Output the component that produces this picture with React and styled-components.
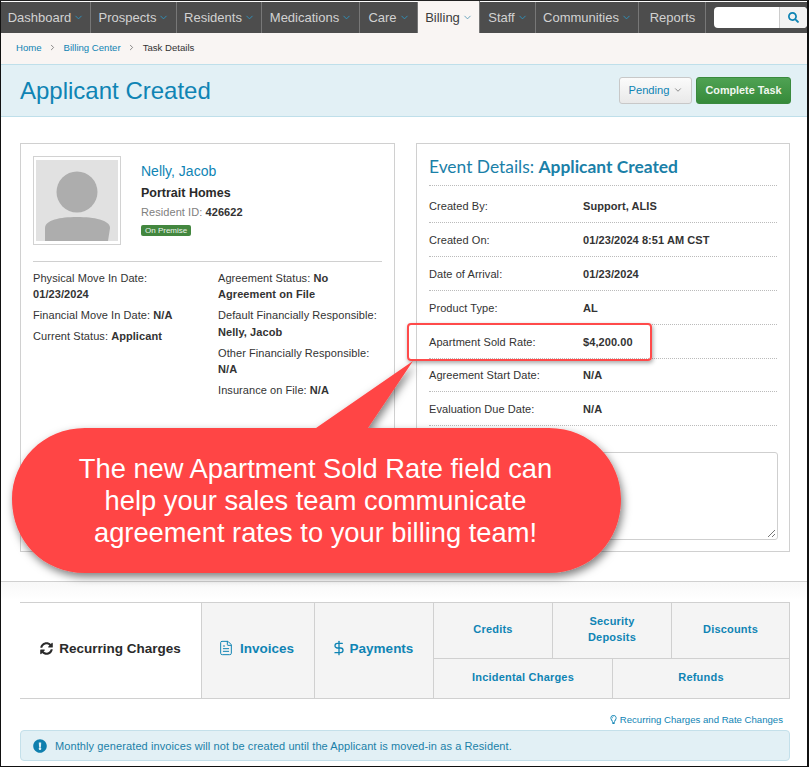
import React from 'react';
import styled, { createGlobalStyle } from 'styled-components';
import { FaSearch, FaSyncAlt, FaRegLightbulb, FaExclamationCircle } from 'react-icons/fa';
import { ChevronDown, ChevronRight, DollarSign, FileText } from 'lucide-react';

const GlobalStyle = createGlobalStyle`
  html, body {
    margin: 0;
    padding: 0;
    background: #fff;
    font-family: "Liberation Sans", Arial, sans-serif;
  }
`;

const Page = styled.div`
  position: relative;
  box-sizing: border-box;
  width: 809px;
  height: 767px;
  overflow: hidden;
  background: #fff;
  border-left: 1px solid #111;
  border-right: 2px solid #111;
  border-bottom: 1px solid #111;
  border-top: 1px solid #222;
`;

const Nav = styled.nav`
  display: flex;
  height: 31px;
  margin-top: 1px;
  background: #4d4d4d;
`;

const NavItem = styled.div`
  display: flex;
  align-items: center;
  justify-content: center;
  box-sizing: border-box;
  width: ${(p) => p.$w}px;
  padding-left: 1px;
  gap: 2px;
  font-size: 13px;
  color: ${(p) => (p.$active ? '#3d3d3d' : '#d2d2d2')};
  background: ${(p) => (p.$active ? '#f9f5f3' : 'transparent')};
  border-right: 1px solid #777;
  margin-top: ${(p) => (p.$active ? '-1px' : '0')};
  svg {
    flex-shrink: 0;
    color: ${(p) => (p.$active ? '#4f94b3' : '#2a9ccc')};
  }
`;

const SearchBox = styled.div`
  display: flex;
  width: 93px;
  height: 21px;
  margin: 5px 0 0 8px;
  border-radius: 4px;
  overflow: hidden;
  background: #fff;
`;

const SearchInput = styled.div`
  flex: 1;
`;

const SearchBtn = styled.div`
  display: flex;
  align-items: center;
  justify-content: center;
  width: 27px;
  background: #f2f2f2;
  border-left: 1px solid #ccc;
  color: #0f84b4;
  font-size: 11px;
`;

const Crumbs = styled.div`
  display: flex;
  align-items: center;
  box-sizing: border-box;
  height: 31px;
  padding: 0 0 2px 15px;
  gap: 6.5px;
  background: #f9f5f3;
  font-size: 9.6px;
  color: #333;
`;

const CrumbLink = styled.span`
  color: #0f84b4;
`;

const Band = styled.div`
  display: flex;
  align-items: center;
  justify-content: space-between;
  box-sizing: border-box;
  height: 53px;
  padding: 0 16px 0 19px;
  background: #e2f0f5;
  border-top: 1px solid #bfdfea;
  border-bottom: 1px solid #bfdfea;
`;

const Title = styled.h1`
  margin: 0;
  font-size: 24px;
  font-weight: 400;
  color: #0f84b4;
`;

const Actions = styled.div`
  display: flex;
  gap: 4px;
`;

const PendingBtn = styled.div`
  display: flex;
  align-items: center;
  justify-content: center;
  gap: 3px;
  box-sizing: border-box;
  width: 73px;
  height: 27px;
  padding-bottom: 2px;
  font-size: 11.2px;
  color: #0f84b4;
  background: linear-gradient(#fbfbfb, #e9e9e9);
  border: 1px solid #c8c8c8;
  border-radius: 3px;
  svg {
    color: #777;
  }
`;

const CompleteBtn = styled.div`
  display: flex;
  align-items: center;
  justify-content: center;
  box-sizing: border-box;
  width: 95px;
  height: 27px;
  padding-bottom: 2px;
  font-size: 10.8px;
  font-weight: 700;
  color: #f1f7ef;
  background: linear-gradient(#4fa253, #368a3a);
  border: 1px solid #3a8a3e;
  border-radius: 3px;
`;

const Content = styled.div`
  display: grid;
  grid-template-columns: 375px 374px;
  column-gap: 21px;
  box-sizing: border-box;
  height: 464px;
  padding: 26px 0 0 19px;
`;

const Panel = styled.section`
  box-sizing: border-box;
  height: 409px;
  border: 1px solid #d0d0d0;
  padding: ${(p) => p.$pad};
`;

const Profile = styled.div`
  display: flex;
  gap: 20px;
  height: 105px;
  border-bottom: 1px solid #d0d0d0;
`;

const Photo = styled.div`
  box-sizing: border-box;
  width: 88px;
  height: 89px;
  padding: 3px 2px;
  border: 1px solid #d2d2d2;
  background: #fff;
  svg {
    display: block;
  }
`;

const ProfileInfo = styled.div`
  display: flex;
  flex-direction: column;
  align-items: flex-start;
  padding-top: 6px;
`;

const Name = styled.div`
  font-size: 14px;
  line-height: 18px;
  color: #0f84b4;
`;

const Community = styled.div`
  margin-top: 4px;
  font-size: 12.5px;
  font-weight: 700;
  line-height: 18px;
  color: #2a2a2a;
`;

const ResidentId = styled.div`
  margin-top: 2px;
  font-size: 11px;
  line-height: 16px;
  letter-spacing: 0.07px;
  color: #808080;
  b {
    color: #333;
  }
`;

const Badge = styled.span`
  margin-top: 5px;
  padding: 0 4px;
  font-size: 8px;
  line-height: 11px;
  color: #eaf4ea;
  background: #43873f;
  border-radius: 2px;
`;

const Facts = styled.div`
  display: grid;
  grid-template-columns: 185px 1fr;
  padding-top: 8px;
`;

const FactCol = styled.div`
  display: flex;
  flex-direction: column;
  gap: 5px;
`;

const Fact = styled.p`
  margin: 0;
  font-size: 11px;
  line-height: ${(p) => (p.$tall ? 16.5 : 16)}px;
  letter-spacing: 0.07px;
  color: #333;
`;

const EventTitle = styled.h2`
  margin: 0;
  padding-bottom: 5px;
  font-family: Lato, sans-serif;
  font-size: 17.4px;
  line-height: 26px;
  font-weight: 400;
  color: #1a80a8;
  border-bottom: 1px dotted #bbb;
  b {
    font-weight: 700;
  }
`;

const Row = styled.div`
  display: grid;
  grid-template-columns: 154px 1fr;
  align-items: center;
  height: ${(p) => p.$h}px;
  padding-top: ${(p) => p.$top || 0}px;
  box-sizing: border-box;
  border-bottom: 1px dotted #bbb;
  font-size: 11px;
  letter-spacing: 0.07px;
  color: #333;
`;

const NoteBox = styled.div`
  position: relative;
  box-sizing: border-box;
  height: 88px;
  margin: 26px -1px 0 0;
  border: 1px solid #cfcfcf;
  border-radius: 3px;
`;

const ResizeHandle = styled.svg`
  position: absolute;
  right: 1px;
  bottom: 1px;
`;

const Lower = styled.div`
  box-sizing: border-box;
  height: 185px;
  padding: 20px 17px 0 19px;
  border-top: 1px solid #d0d0d0;
  background: linear-gradient(#f8f8f8, #fff 18px);
`;

const Tabs = styled.div`
  display: grid;
  box-sizing: border-box;
  grid-template-columns: 181px 113px 119px 1fr;
  height: 97px;
  border-top: 1px solid #d0d0d0;
  border-bottom: 1px solid #d0d0d0;
  border-right: 1px solid #d0d0d0;
`;

const MainTab = styled.div`
  display: flex;
  align-items: center;
  justify-content: center;
  gap: ${(p) => p.$gap || 6}px;
  box-sizing: border-box;
  padding: 0 ${(p) => (p.$active ? 0 : 4)}px 5px 0;
  font-size: 13.5px;
  font-weight: 700;
  color: ${(p) => (p.$active ? '#2a2a2a' : '#0f84b4')};
  background: ${(p) => (p.$active ? '#fff' : '#f4f4f4')};
  border-left: ${(p) => (p.$active ? 'none' : '1px solid #d0d0d0')};
`;

const SubTabs = styled.div`
  display: grid;
  grid-template-rows: 55px 1fr;
  border-left: 1px solid #d0d0d0;
`;

const SubRow = styled.div`
  display: grid;
  grid-template-columns: ${(p) => p.$cols};
  & + & {
    border-top: 1px solid #d0d0d0;
  }
`;

const SubTab = styled.div`
  display: flex;
  align-items: center;
  justify-content: center;
  padding: 0 20px 3px;
  font-size: 11px;
  line-height: 16px;
  font-weight: 700;
  letter-spacing: 0.2px;
  text-align: center;
  color: #0f84b4;
  background: #f4f4f4;
  & + & {
    border-left: 1px solid #d0d0d0;
  }
`;

const TipLink = styled.div`
  display: flex;
  justify-content: flex-end;
  align-items: center;
  gap: 2px;
  height: 31px;
  padding: 10px 7px 0 0;
  box-sizing: border-box;
  font-size: 9.6px;
  color: #0f84b4;
`;

const Alert = styled.div`
  display: flex;
  align-items: center;
  gap: 8px;
  box-sizing: border-box;
  height: 31px;
  padding-left: 12px;
  font-size: 11px;
  letter-spacing: 0.1px;
  color: #1a80a8;
  background: #e2f0f5;
  border: 1px solid #c4e0ea;
  border-radius: 4px;
  svg {
    color: #0f7fae;
    font-size: 14px;
  }
`;

/* annotation drawn on top of the screenshot */
const Highlight = styled.div`
  position: absolute;
  left: 406px;
  top: 322px;
  width: 245px;
  height: 38px;
  box-sizing: border-box;
  border: 2px solid #ff4a4a;
  border-radius: 4px;
  box-shadow: 1px 2px 4px rgba(0, 0, 0, 0.35);
`;

const Bubble = styled.svg`
  position: absolute;
  left: 0;
  top: 0;
  pointer-events: none;
`;

const BubbleText = styled.div`
  position: absolute;
  left: 10px;
  top: 451.5px;
  width: 609px;
  text-align: center;
  font-size: 27.3px;
  line-height: 32px;
  color: #fff;
`;

const navItems = [
  ['Dashboard', 90, true],
  ['Prospects', 86, true],
  ['Residents', 85, true],
  ['Medications', 98, true],
  ['Care', 58, true],
  ['Billing', 62, true, true],
  ['Staff', 56, true],
  ['Communities', 103, true],
  ['Reports', 67, false],
];

const rows = [
  ['Created By:', 'Support, ALIS', 37, 3],
  ['Created On:', '01/23/2024 8:51 AM CST', 34],
  ['Date of Arrival:', '01/23/2024', 34],
  ['Product Type:', 'AL', 34],
  ['Apartment Sold Rate:', '$4,200.00', 34],
  ['Agreement Start Date:', 'N/A', 33],
  ['Evaluation Due Date:', 'N/A', 34],
];

export default function App() {
  return (
    <Page>
      <GlobalStyle />
      <Nav>
        {navItems.map(([label, w, caret, active]) => (
          <NavItem key={label} $w={w} $active={active}>
            {label}
            {caret && <ChevronDown size={11} strokeWidth={1.8} />}
          </NavItem>
        ))}
        <SearchBox>
          <SearchInput />
          <SearchBtn>
            <FaSearch />
          </SearchBtn>
        </SearchBox>
      </Nav>
      <Crumbs>
        <CrumbLink>Home</CrumbLink>
        <ChevronRight size={9} color="#666" />
        <CrumbLink>Billing Center</CrumbLink>
        <ChevronRight size={9} color="#666" />
        Task Details
      </Crumbs>
      <Band>
        <Title>Applicant Created</Title>
        <Actions>
          <PendingBtn>
            Pending <ChevronDown size={10} />
          </PendingBtn>
          <CompleteBtn>Complete Task</CompleteBtn>
        </Actions>
      </Band>
      <Content>
        <Panel $pad="12px 12px 0 12px">
          <Profile>
            <Photo>
              <svg width="82" height="81" viewBox="0 0 82 81">
                <rect width="82" height="81" fill="#e1e1e1" />
                <circle cx="41" cy="32" r="20.5" fill="#adadad" />
                <path d="M9 81 L9 68 C9 60 24 57 41 57 C58 57 74 60 74 68 L72 81 Z" fill="#adadad" />
              </svg>
            </Photo>
            <ProfileInfo>
              <Name>Nelly, Jacob</Name>
              <Community>Portrait Homes</Community>
              <ResidentId>
                Resident ID: <b>426622</b>
              </ResidentId>
              <Badge>On Premise</Badge>
            </ProfileInfo>
          </Profile>
          <Facts>
            <FactCol>
              <Fact>
                Physical Move In Date:
                <br />
                <b>01/23/2024</b>
              </Fact>
              <Fact>
                Financial Move In Date: <b>N/A</b>
              </Fact>
              <Fact>
                Current Status: <b>Applicant</b>
              </Fact>
            </FactCol>
            <FactCol>
              <Fact>
                Agreement Status: <b>No</b>
                <br />
                <b>Agreement on File</b>
              </Fact>
              <Fact $tall>
                Default Financially Responsible:
                <br />
                <b>Nelly, Jacob</b>
              </Fact>
              <Fact>
                Other Financially Responsible:
                <br />
                <b>N/A</b>
              </Fact>
              <Fact>
                Insurance on File: <b>N/A</b>
              </Fact>
            </FactCol>
          </Facts>
        </Panel>
        <Panel $pad="10px 12px 0 12px">
          <EventTitle>
            Event Details: <b>Applicant Created</b>
          </EventTitle>
          {rows.map(([label, value, h, top]) => (
            <Row key={label} $h={h} $top={top}>
              <span>{label}</span>
              <b>{value}</b>
            </Row>
          ))}
          <NoteBox>
            <ResizeHandle width="9" height="9" viewBox="0 0 9 9">
              <path d="M1 8 L8 1 M5 8 L8 5" stroke="#777" strokeWidth="1" fill="none" />
            </ResizeHandle>
          </NoteBox>
        </Panel>
      </Content>
      <Lower>
        <Tabs>
          <MainTab $active>
            <FaSyncAlt size={13} /> Recurring Charges
          </MainTab>
          <MainTab>
            <FileText size={16} strokeWidth={1.5} /> Invoices
          </MainTab>
          <MainTab $gap={3}>
            <DollarSign size={16} strokeWidth={2} /> Payments
          </MainTab>
          <SubTabs>
            <SubRow $cols="118px 119px 1fr">
              <SubTab>Credits</SubTab>
              <SubTab>Security Deposits</SubTab>
              <SubTab>Discounts</SubTab>
            </SubRow>
            <SubRow $cols="178px 1fr">
              <SubTab>Incidental Charges</SubTab>
              <SubTab>Refunds</SubTab>
            </SubRow>
          </SubTabs>
        </Tabs>
        <TipLink>
          <FaRegLightbulb size={9} /> Recurring Charges and Rate Changes
        </TipLink>
        <Alert>
          <FaExclamationCircle />
          Monthly generated invoices will not be created until the Applicant is moved-in as a Resident.
        </Alert>
      </Lower>
      <Highlight />
      <Bubble width="809" height="767" viewBox="0 0 809 767">
        <defs>
          <filter id="bubbleShadow" x="-10%" y="-10%" width="120%" height="130%">
            <feDropShadow dx="2" dy="4" stdDeviation="4" floodColor="#000" floodOpacity="0.5" />
          </filter>
        </defs>
        <path
          d="M84 427 H315 L412 360 L367 427 H548 C590 427 620 460 620 498 C620 540 590 572 548 572 H84 C42 572 11 540 11 498 C11 460 42 427 84 427 Z"
          fill="#ff4545"
          filter="url(#bubbleShadow)"
        />
      </Bubble>
      <BubbleText>
        The new Apartment Sold Rate field can
        <br />
        help your sales team communicate
        <br />
        agreement rates to your billing team!
      </BubbleText>
    </Page>
  );
}
